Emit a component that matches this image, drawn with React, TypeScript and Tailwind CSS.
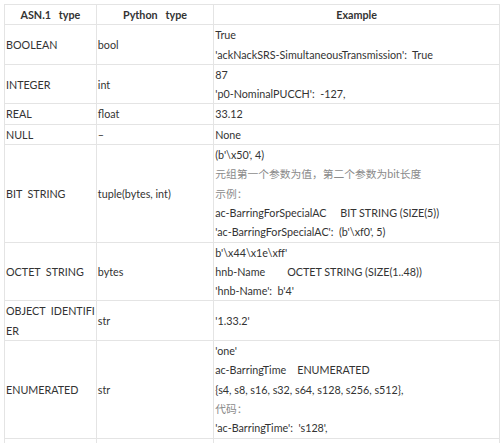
const font = { fontFamily: "Lato, 'Noto Sans CJK SC', sans-serif" };

type Line = { t: string; gray?: boolean };

interface Row {
  asn: string[];
  py: string;
  ex: Line[];
}

const rows: Row[] = [
  {
    asn: ["BOOLEAN"],
    py: "bool",
    ex: [{ t: "True" }, { t: "'ackNackSRS-SimultaneousTransmission':  True" }],
  },
  {
    asn: ["INTEGER"],
    py: "int",
    ex: [{ t: "87" }, { t: "'p0-NominalPUCCH':  -127," }],
  },
  { asn: ["REAL"], py: "float", ex: [{ t: "33.12" }] },
  { asn: ["NULL"], py: "–", ex: [{ t: "None" }] },
  {
    asn: ["BIT  STRING"],
    py: "tuple(bytes, int)",
    ex: [
      { t: "(b'\\x50', 4)" },
      { t: "元组第一个参数为值，第二个参数为bit长度", gray: true },
      { t: "示例：", gray: true },
      { t: "ac-BarringForSpecialAC     BIT STRING (SIZE(5))" },
      { t: "'ac-BarringForSpecialAC':  (b'\\xf0', 5)" },
    ],
  },
  {
    asn: ["OCTET  STRING"],
    py: "bytes",
    ex: [
      { t: "b'\\x44\\x1e\\xff'" },
      { t: "hnb-Name        OCTET STRING (SIZE(1..48))" },
      { t: "'hnb-Name':  b'4'" },
    ],
  },
  {
    asn: ["OBJECT  IDENTIFI", "ER"],
    py: "str",
    ex: [{ t: "'1.33.2'" }],
  },
  {
    asn: ["ENUMERATED"],
    py: "str",
    ex: [
      { t: "'one'" },
      { t: "ac-BarringTime    ENUMERATED" },
      { t: "{s4, s8, s16, s32, s64, s128, s256, s512}," },
      { t: "代码：", gray: true },
      { t: "'ac-BarringTime':  's128'," },
    ],
  },
];

const cell = "border border-[#e4e4e4] px-[1px] align-middle whitespace-pre";

export default function App() {
  return (
    <div className="w-[500px] h-[443px] overflow-hidden bg-white" style={font}>
      <table className="ml-[4px] mt-[4px] border-collapse text-[10.75px] leading-[19.3px] text-[#333]">
        <colgroup>
          <col className="w-[85px]" />
          <col className="w-[119px]" />
          <col className="w-[288px]" />
        </colgroup>
        <thead>
          <tr className="h-[20px]">
            <th className={`${cell} text-center font-bold`}>ASN.1   type</th>
            <th className={`${cell} text-center font-bold`}>Python   type</th>
            <th className={`${cell} text-center font-bold`}>Example</th>
          </tr>
        </thead>
        <tbody>
          {rows.map((r, i) => (
            <tr key={i}>
              <td className={cell}>
                {r.asn.map((a, j) => (
                  <div key={j}>{a}</div>
                ))}
              </td>
              <td className={cell}>{r.py}</td>
              <td className={cell}>
                {r.ex.map((l, j) => (
                  <div key={j} className={l.gray ? "text-[#8a8a8a]" : ""}>
                    {l.t}
                  </div>
                ))}
              </td>
            </tr>
          ))}
          <tr className="h-[20px]">
            <td className={cell}></td>
            <td className={cell}></td>
            <td className={cell}></td>
          </tr>
        </tbody>
      </table>
    </div>
  );
}
